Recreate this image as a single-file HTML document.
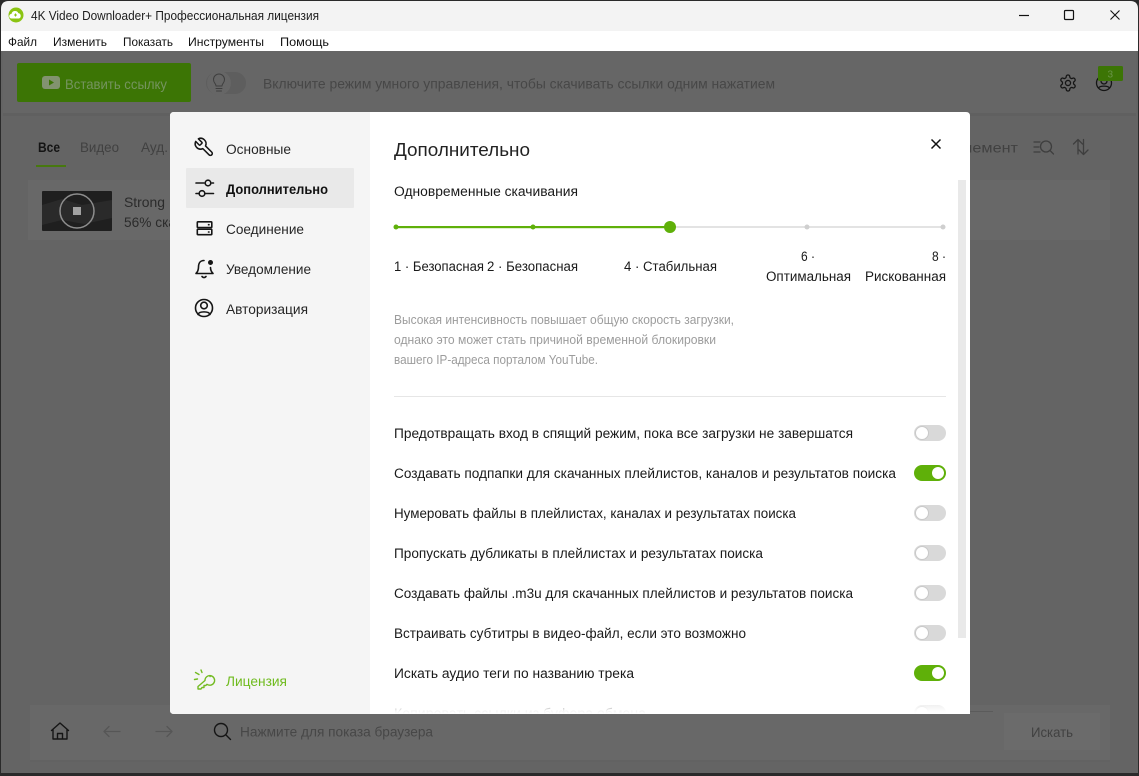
<!DOCTYPE html>
<html lang="ru"><head><meta charset="utf-8"><title>4K Video Downloader+</title>
<style>
html,body{margin:0;padding:0;width:1139px;height:776px;overflow:hidden;background:#656565}
svg{display:block}
text{font-family:"Liberation Sans","DejaVu Sans",sans-serif;font-size:14px;fill:#1c1c1c}
.m{font-size:12px;fill:#111}
.o{font-size:13.5px;fill:#1a1a1a}
.g{font-size:12.5px;fill:#9c9c9c}
.s{font-size:14px;fill:#262626}
.d{fill:#414141}
.i{fill:none;stroke:#151515;stroke-width:1.6;stroke-linecap:round;stroke-linejoin:round}
.di{fill:none;stroke:#3e3e3e;stroke-width:1.3;stroke-linecap:round;stroke-linejoin:round}
.k{fill:none;stroke:#73bb22;stroke-width:1.4;stroke-linecap:round;stroke-linejoin:round}
</style></head><body>
<svg width="1139" height="776" viewBox="0 0 1139 776" xmlns="http://www.w3.org/2000/svg">
<defs><linearGradient id="fade" x1="0" y1="0" x2="0" y2="1"><stop offset="0" stop-color="#fff" stop-opacity="0"/><stop offset=".85" stop-color="#fff" stop-opacity=".95"/><stop offset="1" stop-color="#fff"/></linearGradient></defs>
<rect width="1139" height="776" fill="#2a2a2a"/>
<!-- window -->
<path d="M1 9Q1 1 9 1H1130Q1138 1 1138 9V773H1V9Z" fill="#646464"/>
<path d="M1 9Q1 1 9 1H1130Q1138 1 1138 9V31H1V9Z" fill="#f3f3f3"/>
<rect x="1" y="31" width="1137" height="20" fill="#fff"/>
<!-- app logo -->
<circle cx="16" cy="15" r="7.5" fill="#8bc412"/>
<path d="M11.5 18.500a2.300 2.300 0 0 1 0-4.600 3.600 3.600 0 0 1 6.800-.8 2.800 2.800 0 0 1 .6 5.400z" fill="#fff"/>
<path d="M15.500 13.500v3M14 15h3" stroke="#8bc412" stroke-width="1"/>
<text x="31" y="20" style="font-size:13px" textLength="288" lengthAdjust="spacingAndGlyphs">4K Video Downloader+ Профессиональная лицензия</text>
<!-- window controls -->
<path d="M1019 15.500h10" stroke="#111" stroke-width="1.200"/>
<rect x="1064.500" y="10.500" width="9" height="9" rx="1" fill="none" stroke="#111" stroke-width="1.200"/>
<path d="M1110.500 10.500l9 9M1119.500 10.500l-9 9" stroke="#111" stroke-width="1.100"/>
<!-- menu -->
<text class="m" x="8" y="46" textLength="29" lengthAdjust="spacingAndGlyphs">Файл</text>
<text class="m" x="53" y="46" textLength="54" lengthAdjust="spacingAndGlyphs">Изменить</text>
<text class="m" x="123" y="46" textLength="50" lengthAdjust="spacingAndGlyphs">Показать</text>
<text class="m" x="188" y="46" textLength="76" lengthAdjust="spacingAndGlyphs">Инструменты</text>
<text class="m" x="280" y="46" textLength="49" lengthAdjust="spacingAndGlyphs">Помощь</text>
<!-- top toolbar -->
<rect x="3" y="51" width="1133" height="63" fill="#666"/>
<rect x="3" y="113" width="1133" height="3" fill="#606060"/>
<rect x="17" y="63" width="174" height="39" rx="2" fill="#3c7505"/>
<rect x="42" y="76" width="18" height="13" rx="3" fill="#82936f"/>
<path d="M49 79.500l5 3-5 3z" fill="#3c7505"/>
<text x="65" y="89" style="fill:#75945f" textLength="102" lengthAdjust="spacingAndGlyphs">Вставить ссылку</text>
<rect x="206" y="72" width="40" height="22" rx="11" fill="#5e5e5e"/>
<circle cx="219" cy="83" r="12" fill="#666"/>
<path class="di" style="stroke-width:1" d="M216 88.500h6M216.500 91h5M216 86c0-2.500-2.500-3-2.500-6.500a5.500 5.500 0 0 1 11 0c0 3.500-2.500 4-2.500 6.500z"/>
<text x="263" y="88.500" style="fill:#474747" textLength="512" lengthAdjust="spacingAndGlyphs">Включите режим умного управления, чтобы скачивать ссылки одним нажатием</text>
<!-- gear -->
<g transform="translate(1058.400 73.400) scale(.8)">
<path class="i" style="stroke-width:1.600" d="M12.220 2h-.44a2 2 0 0 0-2 2v.18a2 2 0 0 1-1 1.730l-.43.25a2 2 0 0 1-2 0l-.15-.08a2 2 0 0 0-2.730.73l-.22.38a2 2 0 0 0 .73 2.730l.15.1a2 2 0 0 1 1 1.720v.51a2 2 0 0 1-1 1.740l-.15.09a2 2 0 0 0-.73 2.730l.22.38a2 2 0 0 0 2.730.73l.15-.08a2 2 0 0 1 2 0l.43.25a2 2 0 0 1 1 1.730V20a2 2 0 0 0 2 2h.44a2 2 0 0 0 2-2v-.18a2 2 0 0 1 1-1.730l.43-.25a2 2 0 0 1 2 0l.15.08a2 2 0 0 0 2.730-.73l.22-.39a2 2 0 0 0-.73-2.730l-.15-.08a2 2 0 0 1-1-1.740v-.5a2 2 0 0 1 1-1.740l.15-.09a2 2 0 0 0 .73-2.730l-.22-.38a2 2 0 0 0-2.730-.73l-.15.08a2 2 0 0 1-2 0l-.43-.25a2 2 0 0 1-1-1.730V4a2 2 0 0 0-2-2z"/>
<circle class="i" style="stroke-width:1.600" cx="12" cy="12" r="3.200"/>
</g>
<!-- user -->
<circle class="i" cx="1104" cy="83" r="7.500" style="stroke-width:1.300"/>
<circle class="i" cx="1104" cy="81" r="3" style="stroke-width:1.300"/>
<path class="i" d="M1098.500 88c1.500-2.500 9.500-2.500 11 0" style="stroke-width:1.300"/>
<rect x="1098" y="66" width="25" height="15" rx="1.500" fill="#3c7505"/>
<text x="1107.500" y="77.500" style="font-size:10px;fill:#6a9448">3</text>
<!-- tabs -->
<text x="38" y="152" style="font-weight:700;fill:#141414" textLength="22" lengthAdjust="spacingAndGlyphs">Все</text>
<text x="80" y="152" class="d" textLength="39" lengthAdjust="spacingAndGlyphs">Видео</text>
<text x="141" y="152" class="d" textLength="27" lengthAdjust="spacingAndGlyphs">Ауд.</text>
<rect x="36" y="165" width="30" height="2" fill="#47780f"/>
<text x="955" y="152.500" class="d" textLength="63" lengthAdjust="spacingAndGlyphs">элемент</text>
<path class="di" d="M1034 142h6M1034 147h5M1034 152h6M1050.500 151l3 3"/>
<circle class="di" cx="1046" cy="146.500" r="5.500"/>
<path class="di" d="M1078 154v-14.500M1073.500 144l4.500-4.500 4.500 4.500M1083.500 139.500v14.500M1079 150l4.500 4.500 4.500-4.500"/>
<!-- download item -->
<rect x="28" y="180" width="1082" height="60" fill="#686868"/>
<rect x="42" y="191" width="70" height="40" rx="1" fill="#1f1f1f"/>
<path d="M42 205l20-6 20 6 30-5v18l-28 6-22-4-20 5z" fill="#2a2a2a"/>
<circle cx="77" cy="211" r="17" fill="none" stroke="#8d8d8d" stroke-width="1.500"/>
<rect x="73" y="207" width="8" height="8" fill="#a2a2a2"/>
<text x="124" y="207" style="fill:#2b2b2b" textLength="41" lengthAdjust="spacingAndGlyphs">Strong</text>
<text x="124" y="227" style="fill:#2b2b2b" textLength="52" lengthAdjust="spacingAndGlyphs">56% ска</text>
<!-- bottom bar -->
<rect x="30" y="705" width="1080" height="55" fill="#686868"/>
<rect x="30" y="760" width="1080" height="2" fill="#626262"/>
<path class="i" d="M51.500 730.500L60 723l8.500 7.500M53 729.500V739h14v-9.500M57.500 739v-5.500h5V739" style="stroke-width:1.400"/>
<path class="di" style="stroke:#565656" d="M120 731.500h-16M109 726.500l-5 5 5 5M156 731.500h16M167 726.500l5 5-5 5"/>
<circle class="i" cx="221" cy="730" r="6.500" style="stroke-width:1.400"/>
<path class="i" d="M226 735l4.500 4.500" style="stroke-width:1.400"/>
<text x="240" y="736.500" style="fill:#474747" textLength="193" lengthAdjust="spacingAndGlyphs">Нажмите для показа браузера</text>
<rect x="970" y="711" width="23" height="1" fill="#5b5b5b"/>
<rect x="1004" y="713" width="96" height="37" fill="#6b6b6b"/>
<text x="1031" y="737" style="fill:#414141" textLength="42" lengthAdjust="spacingAndGlyphs">Искать</text>
<!-- dialog -->
<path d="M174 112H966q4 0 4 4V710q0 4-4 4H174q-4 0-4-4V116q0-4 4-4z" fill="#fff"/>
<path d="M174 112H370V714H174q-4 0-4-4V116q0-4 4-4z" fill="#f5f5f5"/>
<rect x="186" y="168" width="168" height="40" rx="1" fill="#e9e9e9"/>
<!-- sidebar icons -->
<g transform="translate(215 136.500) scale(-.9 .9)">
<path class="i" style="stroke-width:1.700" d="M14.700 6.300a1 1 0 0 0 0 1.400l1.600 1.600a1 1 0 0 0 1.400 0l3.770-3.770a6 6 0 0 1-7.940 7.940l-6.910 6.910a2.120 2.120 0 0 1-3-3l6.910-6.910a6 6 0 0 1 7.940-7.940l-3.760 3.760z"/>
</g>
<path class="i" d="M196 183h8M212 183h1.500M196 193.500h2.500M205.500 193.500h8"/>
<circle class="i" cx="208" cy="183" r="2.800"/>
<circle class="i" cx="202" cy="193.500" r="2.800"/>
<rect class="i" x="197.300" y="221.800" width="14.500" height="5.700" rx=".8"/>
<rect class="i" x="197.300" y="229.200" width="14.500" height="5.500" rx=".8"/>
<path class="i" d="M208.500 224.700h.5M208.500 232h.5"/>
<path class="i" d="M204 260.500c-4 0-5.500 3-5.500 6.500 0 3.500-1 5-2.500 6.500h17c-1.500-1.500-2.500-3-2.500-6"/>
<path class="i" d="M202 276.500q2 2 4 0"/>
<circle cx="210.500" cy="262.500" r="2.500" fill="#151515"/>
<circle class="i" cx="204" cy="308" r="8.500"/>
<circle class="i" cx="204" cy="305.500" r="3.300"/>
<path class="i" d="M198 314.500c1-3.500 11-3.500 12 0"/>
<path class="k" d="M205 680.500l-7 6v2.500h3l1-1.500h2v-2h1.800l1.200-1.200a4.800 4.800 0 1 0-2-3.800z"/>
<path class="k" d="M195.500 672.500l3.500 2M194.500 679.500l3-.5M201 670l1 2.500M210 676.500h.2"/>
<!-- sidebar text -->
<text class="s" x="226" y="154" textLength="65" lengthAdjust="spacingAndGlyphs">Основные</text>
<text class="s" x="226" y="194" style="font-weight:700;fill:#111" textLength="102" lengthAdjust="spacingAndGlyphs">Дополнительно</text>
<text class="s" x="226" y="234" textLength="78" lengthAdjust="spacingAndGlyphs">Соединение</text>
<text class="s" x="226" y="274" textLength="85" lengthAdjust="spacingAndGlyphs">Уведомление</text>
<text class="s" x="226" y="314" textLength="82" lengthAdjust="spacingAndGlyphs">Авторизация</text>
<text class="s" x="226" y="686" style="fill:#6fbb1e" textLength="61" lengthAdjust="spacingAndGlyphs">Лицензия</text>
<!-- close -->
<path d="M931.500 139.500l9 9M940.500 139.500l-9 9" stroke="#111" stroke-width="1.500"/>
<!-- scrollbar -->
<rect x="958" y="180" width="8" height="458" fill="#e9e9e9"/>
<!-- content -->
<text x="394" y="156" style="font-size:18px;fill:#222" textLength="136" lengthAdjust="spacingAndGlyphs">Дополнительно</text>
<text class="o" x="394" y="196" textLength="184" lengthAdjust="spacingAndGlyphs">Одновременные скачивания</text>
<rect x="670" y="226" width="273" height="2" fill="#e3e3e3"/>
<rect x="396" y="226" width="274" height="2.200" fill="#5fb009"/>
<circle cx="396" cy="227" r="2.500" fill="#5fb009"/>
<circle cx="533" cy="227" r="2.500" fill="#5fb009"/>
<circle cx="670" cy="227" r="6" fill="#5fb009"/>
<circle cx="807" cy="227" r="2.500" fill="#cfcfcf"/>
<circle cx="943" cy="227" r="2.500" fill="#cfcfcf"/>
<text class="o" x="394" y="271" textLength="90" lengthAdjust="spacingAndGlyphs">1 · Безопасная</text>
<text class="o" x="487" y="271" textLength="91" lengthAdjust="spacingAndGlyphs">2 · Безопасная</text>
<text class="o" x="624" y="271" textLength="93" lengthAdjust="spacingAndGlyphs">4 · Стабильная</text>
<text class="o" x="801" y="261" textLength="14" lengthAdjust="spacingAndGlyphs">6 ·</text>
<text class="o" x="766" y="281" textLength="85" lengthAdjust="spacingAndGlyphs">Оптимальная</text>
<text class="o" x="932" y="261" textLength="14" lengthAdjust="spacingAndGlyphs">8 ·</text>
<text class="o" x="865" y="281" textLength="81" lengthAdjust="spacingAndGlyphs">Рискованная</text>
<text class="g" x="394" y="324" textLength="340" lengthAdjust="spacingAndGlyphs">Высокая интенсивность повышает общую скорость загрузки,</text>
<text class="g" x="394" y="344" textLength="322" lengthAdjust="spacingAndGlyphs">однако это может стать причиной временной блокировки</text>
<text class="g" x="394" y="364" textLength="204" lengthAdjust="spacingAndGlyphs">вашего IP-адреса порталом YouTube.</text>
<rect x="394" y="396" width="552" height="1" fill="#e6e6e6"/>
<text class="o" x="394" y="438" textLength="459" lengthAdjust="spacingAndGlyphs">Предотвращать вход в спящий режим, пока все загрузки не завершатся</text>
<text class="o" x="394" y="478" textLength="502" lengthAdjust="spacingAndGlyphs">Создавать подпапки для скачанных плейлистов, каналов и результатов поиска</text>
<text class="o" x="394" y="518" textLength="402" lengthAdjust="spacingAndGlyphs">Нумеровать файлы в плейлистах, каналах и результатах поиска</text>
<text class="o" x="394" y="558" textLength="369" lengthAdjust="spacingAndGlyphs">Пропускать дубликаты в плейлистах и результатах поиска</text>
<text class="o" x="394" y="598" textLength="459" lengthAdjust="spacingAndGlyphs">Создавать файлы .m3u для скачанных плейлистов и результатов поиска</text>
<text class="o" x="394" y="638" textLength="352" lengthAdjust="spacingAndGlyphs">Встраивать субтитры в видео-файл, если это возможно</text>
<text class="o" x="394" y="678" textLength="240" lengthAdjust="spacingAndGlyphs">Искать аудио теги по названию трека</text>
<text class="o" x="394" y="718" textLength="252" lengthAdjust="spacingAndGlyphs">Копировать ссылки из буфера обмена</text>
<!-- toggles -->
<g fill="#d9d9d9">
<rect x="914" y="425" width="32" height="16" rx="8"/>
<rect x="914" y="505" width="32" height="16" rx="8"/>
<rect x="914" y="545" width="32" height="16" rx="8"/>
<rect x="914" y="585" width="32" height="16" rx="8"/>
<rect x="914" y="625" width="32" height="16" rx="8"/>
<rect x="914" y="705" width="32" height="16" rx="8"/>
</g>
<g fill="#fff" stroke="#c9c9c9" stroke-width="1">
<circle cx="922" cy="433" r="6.500"/>
<circle cx="922" cy="513" r="6.500"/>
<circle cx="922" cy="553" r="6.500"/>
<circle cx="922" cy="593" r="6.500"/>
<circle cx="922" cy="633" r="6.500"/>
<circle cx="922" cy="713" r="6.500"/>
</g>
<rect x="914" y="465" width="32" height="16" rx="8" fill="#5fb009"/>
<circle cx="938" cy="473" r="6" fill="#fff"/>
<rect x="914" y="665" width="32" height="16" rx="8" fill="#5fb009"/>
<circle cx="938" cy="673" r="6" fill="#fff"/>
<!-- bottom fade -->
<rect x="371" y="694" width="599" height="20" fill="url(#fade)"/>
<rect x="370" y="714" width="600" height="10" fill="#686868"/>
</svg>
</body></html>
